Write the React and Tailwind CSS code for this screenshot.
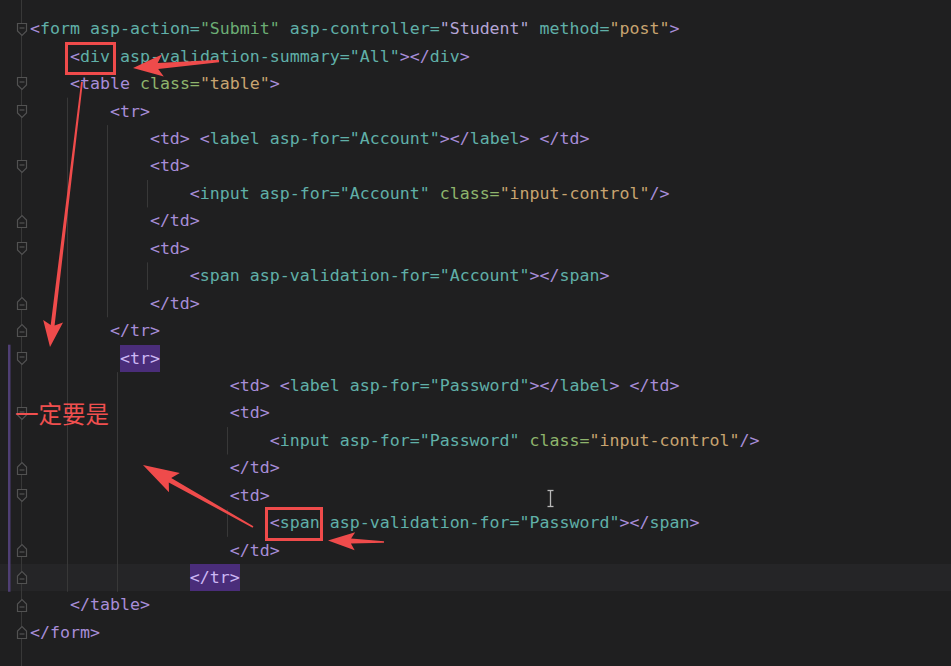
import React from "react";

const LH = 27.45;
const TOP = 15.3;

const CLS = {
  p: "text-[#a78dd8]",
  t: "text-[#60b0a8]",
  g: "text-[#8eb46c]",
  s: "text-[#c8a470]",
  gs: "text-[#6cad74]",
  l: "text-[#b5a5d6]",
  hl: "inline-block h-[27.45px] text-[#cdb8f5] bg-[#4a2d7a]",
  n: "",
};

const tdO = [["p", "<td>"]];
const tdC = [["p", "</td>"]];
const label = (v) => [["p", "<td>"], ["n", " "], ["p", "<"], ["t", "label"], ["n", " "], ["t", "asp-for="], ["t", `"${v}"`], ["p", "></"], ["t", "label"], ["p", ">"], ["n", " "], ["p", "</td>"]];
const input = (v) => [["p", "<"], ["t", "input"], ["n", " "], ["t", "asp-for="], ["t", `"${v}"`], ["n", " "], ["g", "class="], ["s", '"input-control"'], ["p", "/>"]];
const span = (v) => [["p", "<"], ["t", "span"], ["n", " "], ["t", "asp-validation-for="], ["t", `"${v}"`], ["p", "></"], ["t", "span"], ["p", ">"]];

const LINES = [
  { c: 0, m: "o", t: [["p", "<"], ["t", "form"], ["n", " "], ["t", "asp-action="], ["gs", '"Submit"'], ["n", " "], ["t", "asp-controller="], ["l", '"Student"'], ["n", " "], ["t", "method="], ["s", '"post"'], ["p", ">"]] },
  { c: 4, t: [["p", "<"], ["t", "div"], ["n", " "], ["t", "asp-validation-summary="], ["t", '"All"'], ["p", "></"], ["t", "div"], ["p", ">"]] },
  { c: 4, m: "o", t: [["p", "<table"], ["n", " "], ["g", "class="], ["s", '"table"'], ["p", ">"]] },
  { c: 8, m: "o", t: [["p", "<tr>"]] },
  { c: 12, t: label("Account") },
  { c: 12, m: "o", t: tdO },
  { c: 16, t: input("Account") },
  { c: 12, m: "c", t: tdC },
  { c: 12, m: "o", t: tdO },
  { c: 16, t: span("Account") },
  { c: 12, m: "c", t: tdC },
  { c: 8, m: "c", t: [["p", "</tr>"]] },
  { c: 9, m: "o", t: [["hl", "<tr>"]] },
  { c: 20, t: label("Password") },
  { c: 20, m: "o", t: tdO },
  { c: 24, t: input("Password") },
  { c: 20, m: "c", t: tdC },
  { c: 20, m: "o", t: tdO },
  { c: 24, t: span("Password") },
  { c: 20, m: "c", t: tdC },
  { c: 16, m: "c", cur: true, t: [["hl", "</tr>"]] },
  { c: 4, m: "c", t: [["p", "</table>"]] },
  { c: 0, m: "c", t: [["p", "</form>"]] },
];

function Marker({ kind }) {
  return (
    <svg width="12" height="15" viewBox="0 0 12 15" className="relative block">
      {kind === "o" ? (
        <>
          <path d="M1.5 1.5 H10.5 V9 L6 13.5 L1.5 9 Z" fill="#1f1f20" stroke="#525252" strokeWidth="1.2" />
          <path d="M3.5 6 H8.5" stroke="#525252" strokeWidth="1.2" />
        </>
      ) : (
        <>
          <path d="M1.5 13.5 H10.5 V6 L6 1.5 L1.5 6 Z" fill="#1f1f20" stroke="#525252" strokeWidth="1.2" />
          <path d="M3.5 9 H8.5" stroke="#525252" strokeWidth="1.2" />
        </>
      )}
    </svg>
  );
}

function arrow(tail, tip, headLen, headHalf, shaftHead, shaftTail, notch = 4) {
  const [x1, y1] = tail;
  const [x2, y2] = tip;
  const dx = x2 - x1, dy = y2 - y1;
  const L = Math.hypot(dx, dy);
  const ux = dx / L, uy = dy / L;
  const nx = -uy, ny = ux;
  const bx = x2 - ux * headLen, by = y2 - uy * headLen;
  const ix = bx + ux * notch, iy = by + uy * notch;
  const pts = [
    [x1 + nx * shaftTail / 2, y1 + ny * shaftTail / 2],
    [ix + nx * shaftHead / 2, iy + ny * shaftHead / 2],
    [bx + nx * headHalf, by + ny * headHalf],
    [x2, y2],
    [bx - nx * headHalf, by - ny * headHalf],
    [ix - nx * shaftHead / 2, iy - ny * shaftHead / 2],
    [x1 - nx * shaftTail / 2, y1 - ny * shaftTail / 2],
  ];
  return pts.map((p) => `${p[0].toFixed(1)},${p[1].toFixed(1)}`).join(" ");
}

const guides = [
  { x: 21.5, y1: 0, y2: 666 },
  { x: 67.5, y1: TOP + 3 * LH, y2: TOP + 21 * LH },
  { x: 107.5, y1: TOP + 4 * LH, y2: TOP + 11 * LH },
  { x: 147.5, y1: TOP + 6 * LH, y2: TOP + 7 * LH },
  { x: 147.5, y1: TOP + 9 * LH, y2: TOP + 10 * LH },
  { x: 117.5, y1: TOP + 13 * LH, y2: TOP + 21 * LH },
  { x: 227.5, y1: TOP + 15 * LH, y2: TOP + 16 * LH },
  { x: 227.5, y1: TOP + 18 * LH, y2: TOP + 19 * LH },
];

export default function App() {
  const red = "#ef4b4b";
  return (
    <div className="relative w-[951px] h-[666px] overflow-hidden bg-[#1f1f20] font-['DejaVu_Sans_Mono',monospace] text-[16.6px]">
      {/* guides */}
      <svg className="absolute inset-0 pointer-events-none" width="951" height="666">
        {guides.map((g, i) => (
          <line key={i} x1={g.x} x2={g.x} y1={g.y1} y2={g.y2} stroke="#383838" strokeWidth="1" />
        ))}
        <rect x="8" y={TOP + 12 * LH} width="2.5" height={9 * LH} fill="#4f3f74" />
      </svg>

      <div className="flex flex-col pt-[15.3px]">
        {LINES.map((ln, i) => (
          <div
            key={i}
            className={`flex items-center h-[27.45px] leading-[27.45px] whitespace-pre ${ln.cur ? "bg-[#252527]" : ""}`}
          >
            <div className="w-[30px] h-full flex items-center pl-[15.5px]">
              {ln.m ? <Marker kind={ln.m} /> : null}
            </div>
            <div>
              <span>{" ".repeat(ln.c)}</span>
              {ln.t.map(([k, s], j) => (
                <span key={j} className={CLS[k]}>
                  {s}
                </span>
              ))}
            </div>
          </div>
        ))}
      </div>

      {/* annotations */}
      <svg className="absolute inset-0 pointer-events-none" width="951" height="666">
        <rect x="66.5" y="43.5" width="48" height="30" fill="none" stroke={red} strokeWidth="3" />
        <rect x="266.5" y="508.5" width="55" height="31" fill="none" stroke={red} strokeWidth="3" />
        <polygon points={arrow([219, 61], [133, 68], 30, 11, 6, 2.5, 5)} fill={red} />
        <polygon points={arrow([82, 82], [50, 347], 26, 10, 4, 1.8, 4)} fill={red} />
        <polygon points={arrow([253, 527], [143, 465], 36, 11, 5, 1.5, 5)} fill={red} />
        <polygon points={arrow([384, 542], [328, 540.5], 27, 9, 5, 1.5, 4)} fill={red} />
        {/* text cursor */}
        <g stroke="#b8b8b8" strokeWidth="1.3" fill="none">
          <path d="M550.5 491 V506" />
          <path d="M547.5 490.5 H553.5" />
          <path d="M547.5 506.5 H553.5" />
        </g>
      </svg>
      <div className="absolute left-[15px] top-[398px] text-[23.5px] leading-[30px] text-[#f04f4f] font-['Noto_Sans_CJK_SC',sans-serif]">
        一定要是
      </div>
    </div>
  );
}
